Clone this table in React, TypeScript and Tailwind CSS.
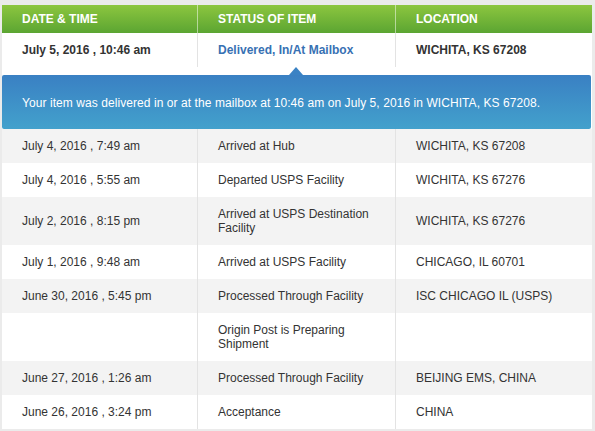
import React from "react";

type Row = { date: string; status: string; loc: string };

const rows: Row[] = [
  { date: "July 4, 2016 , 7:49 am", status: "Arrived at Hub", loc: "WICHITA, KS 67208" },
  { date: "July 4, 2016 , 5:55 am", status: "Departed USPS Facility", loc: "WICHITA, KS 67276" },
  { date: "July 2, 2016 , 8:15 pm", status: "Arrived at USPS Destination Facility", loc: "WICHITA, KS 67276" },
  { date: "July 1, 2016 , 9:48 am", status: "Arrived at USPS Facility", loc: "CHICAGO, IL 60701" },
  { date: "June 30, 2016 , 5:45 pm", status: "Processed Through Facility", loc: "ISC CHICAGO IL (USPS)" },
  { date: "", status: "Origin Post is Preparing Shipment", loc: "" },
  { date: "June 27, 2016 , 1:26 am", status: "Processed Through Facility", loc: "BEIJING EMS, CHINA" },
  { date: "June 26, 2016 , 3:24 pm", status: "Acceptance", loc: "CHINA" },
];

export default function App() {
  return (
    <div
      className="min-h-screen bg-[#ebebeb] pl-[2px] pt-[5px] text-[12px] leading-[14px] text-[#333333]"
      style={{ fontFamily: '"Liberation Sans", Arial, sans-serif' }}
    >
      <div className="w-[590px] bg-white">
        {/* Header */}
        <div className="grid grid-cols-[195px_198px_197px] bg-gradient-to-b from-[#8cc63f] to-[#5ba532] font-bold uppercase text-white">
          <div className="px-5 py-[7px]">Date &amp; Time</div>
          <div className="border-l border-white/50 px-5 py-[7px]">Status of Item</div>
          <div className="border-l border-white/50 px-5 py-[7px]">Location</div>
        </div>

        {/* Delivered row */}
        <div className="grid grid-cols-[195px_198px_197px] font-bold">
          <div className="px-5 py-[10px]">July 5, 2016 , 10:46 am</div>
          <div className="border-l border-[#e3e3e3] px-5 py-[10px] text-[#3771b3]">Delivered, In/At Mailbox</div>
          <div className="border-l border-[#e3e3e3] px-5 py-[10px]">WICHITA, KS 67208</div>
        </div>
        <div className="relative h-[8px] bg-white">
          <div className="absolute left-[287px] top-0 h-0 w-0 border-b-[8px] border-l-[7px] border-r-[7px] border-b-[#3a82c4] border-l-transparent border-r-transparent" />
        </div>
        <div className="mr-[1px] rounded-[2px] bg-gradient-to-b from-[#3a80c3] to-[#43a1cc] px-5 pb-[19px] pt-[21px] tracking-[0.07px] text-white">
          Your item was delivered in or at the mailbox at 10:46 am on July 5, 2016 in WICHITA, KS 67208.
        </div>

        {/* Rows */}
        {rows.map((r, i) => (
          <div
            key={i}
            className={`grid grid-cols-[195px_198px_197px] ${i % 2 === 0 ? "bg-[#f3f3f3]" : "bg-white"}`}
          >
            <div className="flex items-center px-5 py-[10px]">{r.date}</div>
            <div className="flex items-center border-l border-[#e3e3e3] py-[10px] pl-5 pr-[17px]">{r.status}</div>
            <div className="flex items-center border-l border-[#e3e3e3] px-5 py-[10px]">{r.loc}</div>
          </div>
        ))}
      </div>
    </div>
  );
}
